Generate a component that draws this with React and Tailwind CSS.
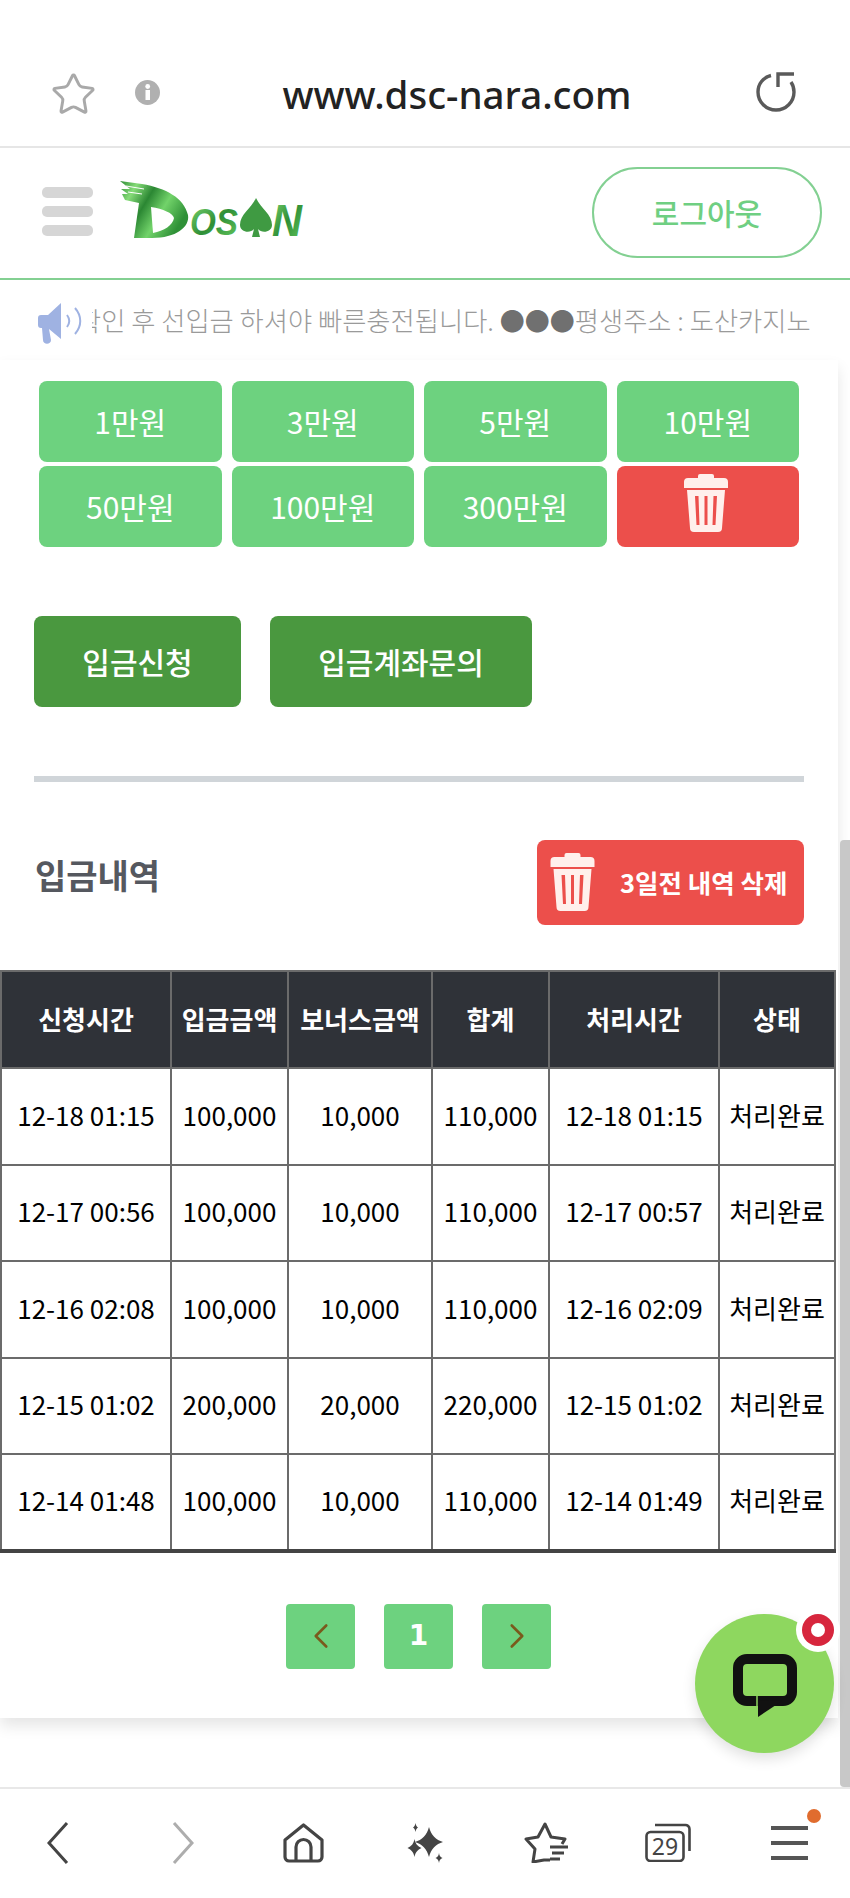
import { ChevronLeft, ChevronRight, Star } from "lucide-react";

const quick = ["1만원", "3만원", "5만원", "10만원", "50만원", "100만원", "300만원"];
const heads = ["신청시간", "입금금액", "보너스금액", "합계", "처리시간", "상태"];
const rows = [
  ["12-18 01:15", "100,000", "10,000", "110,000", "12-18 01:15"],
  ["12-17 00:56", "100,000", "10,000", "110,000", "12-17 00:57"],
  ["12-16 02:08", "100,000", "10,000", "110,000", "12-16 02:09"],
  ["12-15 01:02", "200,000", "20,000", "220,000", "12-15 01:02"],
  ["12-14 01:48", "100,000", "10,000", "110,000", "12-14 01:49"],
];

function Trash({ className }) {
  return (
    <svg viewBox="0 0 46 58" className={className} fill="#fff0ec">
      <path d="M17 0h12a2 2 0 0 1 2 2v2h10a4 4 0 0 1 4 4v6H1V8a4 4 0 0 1 4-4h10V2a2 2 0 0 1 2-2z" />
      <path
        fillRule="evenodd"
        d="M4 16h38l-3 38a4 4 0 0 1-4 4H11a4 4 0 0 1-4-4zM12 22l1.5 29h3L15.5 22zM21.5 22v29h3V22zM30.5 22l-1 29h3l1.5-29z"
      />
    </svg>
  );
}

function Logo() {
  return (
    <svg viewBox="0 0 182 58" className="w-[182px] h-[58px] overflow-visible">
      <defs>
        <linearGradient id="lg" x1="0" y1="0" x2="1" y2="0.5">
          <stop offset="0" stopColor="#2c8a33" />
          <stop offset="0.22" stopColor="#86dc78" />
          <stop offset="0.45" stopColor="#2b8733" />
          <stop offset="0.7" stopColor="#72d36a" />
          <stop offset="1" stopColor="#2f9137" />
        </linearGradient>
        <linearGradient id="lg2" x1="0" y1="0" x2="1" y2="1">
          <stop offset="0" stopColor="#7ed872" />
          <stop offset="0.5" stopColor="#2f8f37" />
          <stop offset="1" stopColor="#69cd62" />
        </linearGradient>
      </defs>
      <path
        fill="url(#lg)"
        fillRule="evenodd"
        d="M0 0l22 3c24 4 42 14 46 31 2 12-12 23-36 23H14l5-35L5 19l-3-6 6 0L1 8l9 0zM31 26l2 26c11-2 20-8 21-15-1-5-11-9-23-11z"
      />
      <path stroke="#fff" strokeWidth="1" d="M6 5l18 3M8 11l14 2" />
      <text x="70" y="54" fontFamily="'Liberation Sans', sans-serif" fontWeight="700" fontStyle="italic" fontSize="36" textLength="48" lengthAdjust="spacingAndGlyphs" fill="url(#lg2)">OS</text>
      <path fill="#3f9a42" d="M136 17c5 11 16 16 16 27 0 7-10 9-14 4l2 8h-8l2-8c-4 5-14 3-14-4 0-11 11-16 16-27z" />
      <text x="152" y="55" fontFamily="'Liberation Sans', sans-serif" fontWeight="700" fontStyle="italic" fontSize="45" textLength="30" lengthAdjust="spacingAndGlyphs" fill="url(#lg2)">N</text>
    </svg>
  );
}

export default function App() {
  return (
    <div className="relative w-[850px] h-[1898px] overflow-hidden bg-white flex flex-col font-['Noto_Sans_CJK_KR','Noto_Sans',sans-serif]">
      {/* browser address bar */}
      <div className="h-[148px] shrink-0 border-b-2 border-[#e6e6e6] flex items-start pt-[72px] pl-[50px] pr-[54px]">
        <Star size={47} strokeWidth={1.5} color="#a9a9a9" className="-mt-[1px]" />
        <svg viewBox="0 0 25 25" className="w-[25px] h-[25px] ml-[38px] mt-[8px]">
          <circle cx="12.5" cy="12.5" r="12.5" fill="#b0b0b0" />
          <rect x="10.5" y="10" width="4.5" height="10" fill="#fff" />
          <circle cx="12.7" cy="6.5" r="2.4" fill="#fff" />
        </svg>
        <div className="flex-1 text-center text-[38.500px] leading-[44px] font-medium text-[#222] font-['Noto_Sans',sans-serif] pr-[2px]">
          www.dsc-nara.com
        </div>
        <svg viewBox="0 0 40 40" className="w-[40px] h-[40px]" fill="none" stroke="#5a5a5a" strokeWidth="3.4">
          <path d="M15 3.5C7 5.5 2 12 2 20a18 18 0 0 0 36 0c0-3.500-1-7-3-10" />
          <path d="M38 2H22v13" />
        </svg>
      </div>

      {/* site header */}
      <div className="h-[132px] shrink-0 border-b-2 border-[#83d092] flex items-center pl-[42px] pr-[28px]">
        <div className="flex flex-col gap-[8px] w-[51px] -mt-[3px]">
          <span className="h-[11px] rounded-[5px] bg-[#d6d6d6]" />
          <span className="h-[11px] rounded-[5px] bg-[#d6d6d6]" />
          <span className="h-[11px] rounded-[5px] bg-[#d6d6d6]" />
        </div>
        <div className="ml-[27px] -mt-[6px]">
          <Logo />
        </div>
        <button className="ml-auto w-[230px] h-[91px] -mt-[2px] rounded-[46px] border-2 border-[#83d092] text-[#6fcf82] text-[30px] font-medium">
          로그아웃
        </button>
      </div>

      {/* notice */}
      <div className="h-[80px] shrink-0 flex items-center pl-[38px] pr-[38px]">
        <svg viewBox="0 0 46 42" className="w-[46px] h-[42px] shrink-0 mt-[8px]">
          <path fill="#9fb2e2" d="M3 12h7L23 0v36L11 26l2 11c0 5-8 5-8 0L4 25H3a3 3 0 0 1-3-3v-7a3 3 0 0 1 3-3z" />
          <path fill="none" stroke="#9fb2e2" strokeWidth="2" d="M29 12c3 4 3 8 0 12M37 5c7 8 7 18 0 26" />
        </svg>
        <div className="flex-1 ml-[8px] overflow-hidden">
          <div className="-ml-[15px] whitespace-nowrap text-[26.300px] font-light text-[#9a9a9a]">
            확인 후 선입금 하셔야 빠른충전됩니다. <span className="text-[25px] text-[#707070]">●●●</span>평생주소 : 도산카지노
          </div>
        </div>
      </div>

      {/* main card */}
      <div className="flex-1 min-h-0">
        <div className="w-[838px] pt-[21px] pb-[49px] bg-white shadow-[0_8px_14px_rgba(0,0,0,0.1)]">
          <div className="ml-[39px] w-[760px] grid grid-cols-4 gap-x-[10px] gap-y-[4px]">
            {quick.map((q) => (
              <button key={q} className="h-[81px] rounded-[8px] bg-[#6dd27f] text-white text-[30px] font-normal">
                {q}
              </button>
            ))}
            <button className="h-[81px] rounded-[8px] bg-[#ec4f4b] flex items-center justify-center">
              <Trash className="w-[46px] h-[58px] mr-[4px] mb-[7px]" />
            </button>
          </div>

          <div className="ml-[34px] mt-[69px] flex gap-[29px]">
            <button className="w-[207px] h-[91px] rounded-[8px] bg-[#4a983f] text-white text-[30px] font-medium">입금신청</button>
            <button className="w-[262px] h-[91px] rounded-[8px] bg-[#4a983f] text-white text-[30px] font-medium">입금계좌문의</button>
          </div>

          <div className="mx-[34px] mt-[69px] h-[6px] bg-[#d0d5d9]" />

          <div className="mx-[34px] mt-[58px] h-[85px] flex items-start justify-between">
            <h2 className="ml-[1px] text-[34px] leading-[70px] font-bold text-[#55585f]">입금내역</h2>
            <button className="w-[267px] h-[85px] rounded-[8px] bg-[#ec4f4b] flex items-center pl-[12px] text-white text-[25.500px] font-bold">
              <Trash className="w-[47px] h-[58px] mb-[2px]" />
              <span className="ml-[24px]">3일전 내역 삭제</span>
            </button>
          </div>

          <table className="mt-[45px] w-[834px] table-fixed border-collapse text-center text-[26px] text-black">
            <colgroup>
              <col className="w-[170px]" />
              <col className="w-[117px]" />
              <col className="w-[144px]" />
              <col className="w-[117px]" />
              <col className="w-[170px]" />
              <col className="w-[116px]" />
            </colgroup>
            <thead>
              <tr className="h-[97px] bg-[#2f3238] text-white text-[26px] font-bold">
                {heads.map((h) => (
                  <th key={h} className="border-2 border-[#6b6b6b] font-bold p-0 pb-[2px] whitespace-nowrap">
                    {h}
                  </th>
                ))}
              </tr>
            </thead>
            <tbody className="border-b-4 border-[#444]">
              {rows.map((r) => (
                <tr key={r[0]} className="h-[96.500px]">
                  {r.map((c, i) => (
                    <td key={i} className="border-2 border-[#6b6b6b] p-0 pb-[4px] whitespace-nowrap">
                      {c}
                    </td>
                  ))}
                  <td className="border-2 border-[#6b6b6b] p-0 pb-[4px] whitespace-nowrap">처리완료</td>
                </tr>
              ))}
            </tbody>
          </table>

          <div className="mt-[51px] flex justify-center gap-[29px] pr-[1px]">
            <button className="w-[69px] h-[65px] rounded-[4px] bg-[#6dd27f] flex items-center justify-center">
              <ChevronLeft size={42} strokeWidth={1.5} color="#7a5a1c" />
            </button>
            <button className="w-[69px] h-[65px] rounded-[4px] bg-[#6dd27f] text-white text-[28px] font-bold font-['DejaVu_Sans',sans-serif]">1</button>
            <button className="w-[69px] h-[65px] rounded-[4px] bg-[#6dd27f] flex items-center justify-center">
              <ChevronRight size={42} strokeWidth={1.5} color="#7a5a1c" />
            </button>
          </div>
        </div>
      </div>

      {/* browser bottom bar */}
      <div className="h-[111px] shrink-0 border-t-2 border-[#e8e8e8] grid grid-cols-7 items-center pb-[2px] text-[#444]">
        <div className="flex justify-center pr-[5px]">
          <svg viewBox="0 0 22 42" className="w-[22px] h-[42px]" fill="none" stroke="#444" strokeWidth="3">
            <path d="M20 1L2 21l18 20" />
          </svg>
        </div>
        <div className="flex justify-center pl-[2px]">
          <svg viewBox="0 0 22 42" className="w-[22px] h-[42px]" fill="none" stroke="#adadad" strokeWidth="3">
            <path d="M2 1l18 20L2 41" />
          </svg>
        </div>
        <div className="flex justify-center">
          <svg viewBox="0 0 41 40" className="w-[41px] h-[40px]" fill="none" stroke="#444" strokeWidth="3.2" strokeLinejoin="round">
            <path d="M2 17L20.500 2 39 17v17a4 4 0 0 1-4 4H6a4 4 0 0 1-4-4z" />
            <path d="M13 38V24a7.500 7.500 0 0 1 15 0v14" />
          </svg>
        </div>
        <div className="flex justify-center">
          <svg viewBox="0 0 38 40" className="w-[38px] h-[40px]" fill="#444">
            <path d="M23 4c2 8 7 13 14 15-7 2-12 7-14 15-2-8-7-13-14-15 7-2 12-7 14-15z" />
            <path d="M9.500 16c1 5 3 7 7 9-4 2-6 4-7 9-1-5-3-7-7-9 4-2 6-4 7-9z" transform="translate(-1 0)" />
            <path d="M9.500 0c.4 2.500 1 3.500 2.500 4.500-1.500 1-2.100 2-2.500 4.500-.4-2.500-1-3.500-2.500-4.500C8.500 3.500 9.100 2.500 9.500 0zM33 30c.4 3 1.500 4 3.500 5-2 1-3.100 2-3.500 5-.4-3-1.500-4-3.500-5 2-1 3.100-2 3.500-5z" />
          </svg>
        </div>
        <div className="flex justify-center">
          <svg viewBox="0 0 45 41" className="w-[45px] h-[41px]" fill="none" stroke="#444" strokeWidth="3" strokeLinejoin="round">
            <path d="M26 38h-6l-11 2 2-13L2 17l12-2 7-13 6 13 14 2-3 5" />
            <path d="M26 25h18M28 31h12M26 37h10" strokeWidth="2.800" />
          </svg>
        </div>
        <div className="flex justify-center">
          <svg viewBox="0 0 46 39" className="w-[46px] h-[39px]" fill="none" stroke="#444" strokeWidth="2.600">
            <rect x="1.500" y="9" width="37" height="29" rx="4" />
            <path d="M10 2h30a4 4 0 0 1 4.500 4v22" />
            <text x="20" y="32" textAnchor="middle" fontSize="23" fontFamily="'Noto Sans', sans-serif" fill="#444" stroke="none">29</text>
          </svg>
        </div>
        <div className="relative flex justify-center">
          <div className="w-[37px] flex flex-col gap-[11px]">
            <span className="h-[4px] bg-[#555]" />
            <span className="h-[4px] bg-[#555]" />
            <span className="h-[4px] bg-[#555]" />
          </div>
          <span className="absolute top-[-17px] left-[78px] w-[14px] h-[14px] rounded-full bg-[#e06c2e]" />
        </div>
      </div>

      {/* overlay scrollbar */}
      <div className="absolute left-[840px] top-[840px] w-[10px] h-[947px] bg-[#c8c8c8] rounded-l-[4px]" />

      {/* chat button */}
      <div className="absolute left-[695px] top-[1614px] w-[139px] h-[139px] rounded-full bg-[#8ed75f] shadow-[0_6px_14px_rgba(0,0,0,0.12)] flex items-center justify-center">
        <svg viewBox="0 0 64 63" className="w-[64px] h-[63px] mt-[3px]">
          <rect x="5" y="5" width="54" height="42" rx="9" fill="none" stroke="#111" strokeWidth="10" />
          <path fill="#111" d="M25 46v17l24-16z" />
          <path stroke="#8ed75f" strokeWidth="1.500" d="M24 41v11" />
        </svg>
        <span className="absolute left-[101px] top-[-6px] w-[44px] h-[44px] rounded-full bg-white flex items-center justify-center">
          <span className="w-[32px] h-[32px] rounded-full bg-[#d7263d] flex items-center justify-center">
            <span className="w-[14px] h-[14px] rounded-full bg-white" />
          </span>
        </span>
      </div>
    </div>
  );
}
